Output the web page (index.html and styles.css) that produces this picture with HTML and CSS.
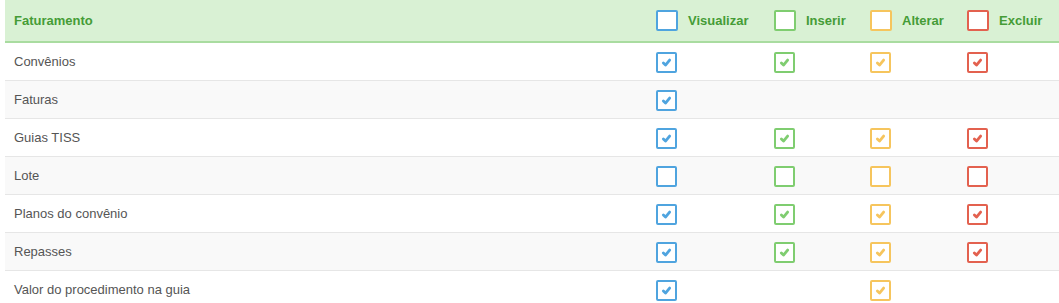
FILE: index.html
```html
<!DOCTYPE html>
<html lang="pt">
<head>
<meta charset="utf-8">
<link rel="stylesheet" href="styles.css">
</head>
<body>
<div class="perm">
  <div class="row head">
    <div class="name">Faturamento</div>
    <div class="cell"><span class="box big blue"></span><span class="lbl">Visualizar</span></div>
    <div class="cell"><span class="box big green"></span><span class="lbl">Inserir</span></div>
    <div class="cell"><span class="box big yellow"></span><span class="lbl">Alterar</span></div>
    <div class="cell"><span class="box big red"></span><span class="lbl">Excluir</span></div>
  </div>

  <div class="row">
    <div class="name">Convênios</div>
    <div class="cell"><span class="box blue on"><svg viewBox="0 0 12 12"><path d="M2.6 6.6 4.9 8.8 9.4 3.4"/></svg></span></div>
    <div class="cell"><span class="box green on"><svg viewBox="0 0 12 12"><path d="M2.6 6.6 4.9 8.8 9.4 3.4"/></svg></span></div>
    <div class="cell"><span class="box yellow on"><svg viewBox="0 0 12 12"><path d="M2.6 6.6 4.9 8.8 9.4 3.4"/></svg></span></div>
    <div class="cell"><span class="box red on"><svg viewBox="0 0 12 12"><path d="M2.6 6.6 4.9 8.8 9.4 3.4"/></svg></span></div>
  </div>

  <div class="row alt">
    <div class="name">Faturas</div>
    <div class="cell"><span class="box blue on"><svg viewBox="0 0 12 12"><path d="M2.6 6.6 4.9 8.8 9.4 3.4"/></svg></span></div>
    <div class="cell"></div>
    <div class="cell"></div>
    <div class="cell"></div>
  </div>

  <div class="row">
    <div class="name">Guias TISS</div>
    <div class="cell"><span class="box blue on"><svg viewBox="0 0 12 12"><path d="M2.6 6.6 4.9 8.8 9.4 3.4"/></svg></span></div>
    <div class="cell"><span class="box green on"><svg viewBox="0 0 12 12"><path d="M2.6 6.6 4.9 8.8 9.4 3.4"/></svg></span></div>
    <div class="cell"><span class="box yellow on"><svg viewBox="0 0 12 12"><path d="M2.6 6.6 4.9 8.8 9.4 3.4"/></svg></span></div>
    <div class="cell"><span class="box red on"><svg viewBox="0 0 12 12"><path d="M2.6 6.6 4.9 8.8 9.4 3.4"/></svg></span></div>
  </div>

  <div class="row alt">
    <div class="name">Lote</div>
    <div class="cell"><span class="box blue"></span></div>
    <div class="cell"><span class="box green"></span></div>
    <div class="cell"><span class="box yellow"></span></div>
    <div class="cell"><span class="box red"></span></div>
  </div>

  <div class="row">
    <div class="name">Planos do convênio</div>
    <div class="cell"><span class="box blue on"><svg viewBox="0 0 12 12"><path d="M2.6 6.6 4.9 8.8 9.4 3.4"/></svg></span></div>
    <div class="cell"><span class="box green on"><svg viewBox="0 0 12 12"><path d="M2.6 6.6 4.9 8.8 9.4 3.4"/></svg></span></div>
    <div class="cell"><span class="box yellow on"><svg viewBox="0 0 12 12"><path d="M2.6 6.6 4.9 8.8 9.4 3.4"/></svg></span></div>
    <div class="cell"><span class="box red on"><svg viewBox="0 0 12 12"><path d="M2.6 6.6 4.9 8.8 9.4 3.4"/></svg></span></div>
  </div>

  <div class="row alt">
    <div class="name">Repasses</div>
    <div class="cell"><span class="box blue on"><svg viewBox="0 0 12 12"><path d="M2.6 6.6 4.9 8.8 9.4 3.4"/></svg></span></div>
    <div class="cell"><span class="box green on"><svg viewBox="0 0 12 12"><path d="M2.6 6.6 4.9 8.8 9.4 3.4"/></svg></span></div>
    <div class="cell"><span class="box yellow on"><svg viewBox="0 0 12 12"><path d="M2.6 6.6 4.9 8.8 9.4 3.4"/></svg></span></div>
    <div class="cell"><span class="box red on"><svg viewBox="0 0 12 12"><path d="M2.6 6.6 4.9 8.8 9.4 3.4"/></svg></span></div>
  </div>

  <div class="row">
    <div class="name">Valor do procedimento na guia</div>
    <div class="cell"><span class="box blue on"><svg viewBox="0 0 12 12"><path d="M2.6 6.6 4.9 8.8 9.4 3.4"/></svg></span></div>
    <div class="cell"></div>
    <div class="cell"><span class="box yellow on"><svg viewBox="0 0 12 12"><path d="M2.6 6.6 4.9 8.8 9.4 3.4"/></svg></span></div>
    <div class="cell"></div>
  </div>
</div>
</body>
</html>
```

FILE: styles.css
```css
html, body {
  margin: 0;
  padding: 0;
  background: #fff;
}
body {
  font-family: "Liberation Sans", Arial, sans-serif;
  font-size: 13px;
  color: #555;
  padding-left: 5px;
}
.perm {
  width: 1054px;
}
.row {
  display: grid;
  grid-template-columns: 641px 118px 96px 97px 102px;
  height: 38px;
  box-sizing: border-box;
  border-bottom: 1px solid #e6e6e6;
  background: #fff;
}
.row.alt {
  background: #f9f9f9;
}
.row.head {
  height: 43px;
  background: #d9f1d4;
  border-bottom: 2px solid #a9dca0;
  color: #459c37;
  font-weight: bold;
}
.name {
  display: flex;
  align-items: center;
  padding-left: 9px;
}
.cell {
  display: flex;
  align-items: center;
  padding-left: 10px;
  padding-top: 1px;
}
.row.head .cell {
  padding-top: 0;
}
.lbl {
  margin-left: 10px;
}
.box {
  width: 21px;
  height: 21px;
  box-sizing: border-box;
  border: 2px solid;
  border-radius: 2px;
  background: #fff;
  display: flex;
  align-items: center;
  justify-content: center;
}
.box.big {
  width: 22px;
  height: 21px;
  margin-top: -1px;
}
.box svg {
  width: 11px;
  height: 11px;
  margin: 1px 1px 0 0;
}
.box svg path {
  fill: none;
  stroke-width: 3.1;
  stroke-linecap: round;
  stroke-linejoin: round;
}
.blue { border-color: #4fa4df; }
.green { border-color: #7fcd70; }
.yellow { border-color: #f6c55d; }
.red { border-color: #e3614f; }
.blue svg path { stroke: #4fa4df; }
.green svg path { stroke: #7fcd70; }
.yellow svg path { stroke: #f6c55d; }
.red svg path { stroke: #e3614f; }
```
